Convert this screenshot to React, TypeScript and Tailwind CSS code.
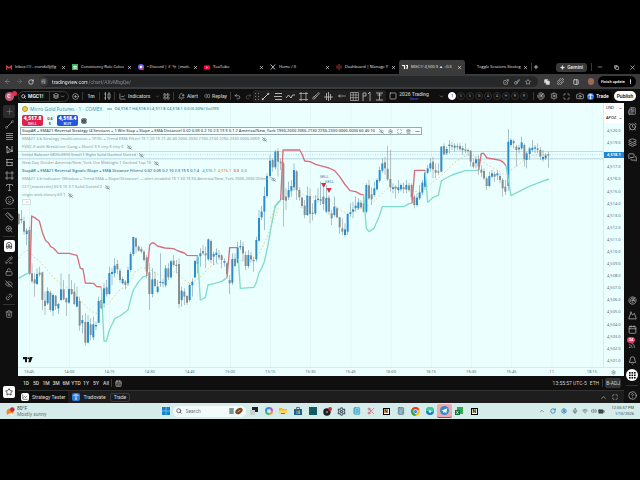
import type { ReactNode } from "react";
import {
  AlarmClock,
  ArrowLeft,
  ArrowRight,
  Battery,
  Bell,
  BellPlus,
  Brush,
  Calendar,
  CalendarRange,
  Camera,
  ChartLine,
  ChevronDown,
  ChevronUp,
  CirclePlus,
  CircleHelp,
  Copy,
  Ellipsis,
  ExternalLink,
  EyeOff,
  FastForward,
  Info,
  Key,
  Layers,
  LayoutGrid,
  Link2,
  LockOpen,
  Magnet,
  Maximize,
  MessagesSquare,
  Mic,
  Minus,
  MoveLeft,
  Mountain,
  Newspaper,
  PanelRight,
  PencilLine,
  Plus,
  Puzzle,
  Radar,
  Redo2,
  RotateCw,
  Rss,
  Ruler,
  Search,
  Settings,
  SlidersHorizontal,
  Smile,
  Sparkle,
  Square,
  Star,
  Trash2,
  Type,
  Undo2,
  Volume2,
  Wifi,
  X,
  ZoomIn,
  Scissors,
  Calculator,
  NotebookText,
} from "lucide-react";

// x, high, body top, body bottom, low, 1 = up
type Candle = [number, number, number, number, number, number];

const candlesA: Candle[] = [
  [56, 40, 42, 72, 75, 0], [64, 30, 57, 60, 70, 1], [72, 50, 63, 95, 105, 0], [80, 85, 92, 102, 135, 1],
  [88, 80, 90, 220, 225, 0], [96, 190, 220, 244, 250, 0], [104, 220, 238, 250, 290, 0], [111, 205, 222, 252, 255, 1],
  [119, 200, 218, 224, 230, 0], [127, 215, 217, 300, 330, 0], [135, 275, 302, 318, 345, 0], [143, 262, 273, 310, 315, 1],
  [151, 272, 277, 330, 335, 0], [159, 280, 285, 332, 348, 1], [167, 285, 287, 318, 330, 0], [175, 308, 312, 325, 342, 1],
  [183, 220, 268, 300, 303, 1], [191, 240, 268, 298, 300, 0], [199, 292, 295, 307, 348, 0], [207, 222, 267, 308, 312, 1],
  [215, 240, 267, 282, 285, 0], [223, 250, 275, 312, 315, 0], [231, 260, 290, 320, 322, 1], [239, 290, 303, 377, 392, 0],
  [247, 345, 360, 370, 400, 1], [256, 340, 366, 428, 437, 0], [264, 345, 366, 428, 430, 1], [272, 355, 373, 405, 420, 0],
  [280, 350, 373, 412, 420, 1], [288, 365, 375, 378, 390, 1], [296, 290, 303, 368, 370, 1], [304, 270, 300, 325, 327, 0],
  [312, 250, 265, 310, 322, 1], [320, 240, 262, 283, 290, 0], [328, 200, 219, 282, 285, 1], [336, 205, 216, 222, 255, 1],
  [344, 175, 197, 220, 232, 1], [352, 180, 192, 208, 222, 0], [360, 205, 212, 240, 248, 0], [368, 230, 237, 250, 253, 1],
  [376, 240, 245, 255, 268, 0], [384, 200, 210, 250, 258, 1], [392, 155, 162, 210, 215, 1], [400, 110, 111, 162, 168, 1],
  [408, 112, 115, 140, 160, 0], [416, 135, 140, 152, 155, 0], [424, 140, 147, 155, 160, 0], [432, 150, 155, 180, 185, 0],
  [440, 165, 172, 215, 235, 0], [448, 190, 217, 282, 330, 0], [457, 205, 238, 282, 292, 1], [465, 215, 237, 258, 262, 0],
  [473, 240, 260, 276, 280, 1], [481, 160, 245, 249, 260, 1], [489, 235, 246, 249, 262, 0], [497, 195, 205, 256, 262, 1],
  [505, 190, 205, 232, 240, 0], [513, 180, 184, 232, 235, 1], [521, 165, 182, 195, 200, 0], [529, 180, 194, 197, 220, 0],
  [537, 175, 192, 312, 325, 0], [545, 260, 272, 300, 320, 1], [553, 265, 275, 290, 315, 0], [561, 285, 288, 308, 315, 0],
  [569, 250, 255, 300, 305, 1], [577, 235, 245, 256, 290, 1], [585, 180, 183, 232, 235, 1], [593, 165, 170, 192, 220, 1],
  [601, 145, 160, 169, 200, 1], [609, 135, 153, 160, 165, 0], [617, 140, 160, 166, 205, 0], [625, 115, 118, 178, 182, 1],
  [633, 118, 123, 180, 190, 0], [641, 155, 162, 170, 195, 1], [649, 145, 158, 165, 190, 1], [657, 150, 165, 172, 180, 0],
  [665, 163, 166, 180, 205, 0], [673, 175, 183, 188, 200, 1], [681, 188, 190, 222, 225, 0], [689, 225, 240, 250, 282, 0],
  [697, 160, 177, 248, 255, 1], [705, 160, 176, 198, 202, 0], [713, 125, 142, 188, 190, 1], [721, 120, 138, 142, 150, 1],
  [729, 125, 139, 160, 185, 0], [737, 155, 165, 198, 210, 0], [745, 150, 165, 198, 205, 1], [753, 155, 166, 178, 188, 0],
  [761, 170, 180, 184, 215, 0], [769, 110, 120, 178, 185, 1],
];

const candlesB: Candle[] = [
  [135, 330, 354, 422, 425, 1], [143, 318, 335, 352, 360, 1], [151, 260, 288, 335, 390, 1], [159, 220, 228, 288, 295, 1],
  [168, 165, 182, 228, 235, 1], [176, 175, 180, 202, 215, 0], [184, 150, 155, 202, 208, 1], [192, 145, 153, 185, 230, 0],
  [200, 175, 185, 190, 210, 0], [208, 185, 190, 300, 380, 0], [216, 265, 290, 302, 330, 0], [224, 245, 270, 292, 300, 1],
  [232, 240, 258, 272, 290, 1], [240, 190, 210, 262, 270, 1], [248, 210, 214, 270, 300, 0], [256, 262, 270, 292, 302, 0],
  [264, 290, 293, 318, 325, 0], [272, 300, 317, 345, 355, 0], [280, 260, 287, 345, 348, 1], [288, 265, 288, 342, 370, 0],
  [296, 310, 338, 342, 362, 0], [304, 285, 300, 340, 345, 1], [312, 265, 296, 300, 308, 1], [320, 245, 298, 301, 315, 1],
  [328, 265, 290, 312, 330, 0], [337, 255, 294, 335, 340, 1], [345, 285, 293, 335, 345, 0], [353, 330, 340, 355, 375, 0],
  [361, 290, 320, 345, 350, 1], [369, 320, 325, 352, 355, 0], [377, 350, 352, 382, 402, 0], [385, 355, 385, 395, 405, 0],
  [393, 370, 388, 405, 410, 1], [401, 340, 342, 395, 405, 1], [409, 310, 337, 342, 350, 1], [417, 305, 328, 335, 355, 1],
  [425, 290, 317, 325, 335, 1], [433, 295, 307, 325, 330, 1], [441, 300, 308, 322, 325, 0], [449, 285, 310, 335, 338, 0],
  [457, 250, 255, 335, 340, 1], [465, 240, 256, 295, 300, 0], [473, 262, 283, 298, 315, 0], [481, 245, 265, 285, 290, 1],
  [489, 235, 240, 268, 272, 1], [497, 200, 210, 242, 248, 1], [505, 175, 190, 212, 218, 1], [513, 170, 187, 205, 225, 0],
  [521, 138, 206, 238, 243, 0], [529, 150, 237, 262, 275, 0], [537, 250, 262, 267, 280, 1], [545, 255, 260, 266, 295, 0],
  [553, 240, 262, 270, 280, 1], [561, 250, 255, 268, 275, 1], [569, 248, 262, 267, 280, 0], [577, 240, 255, 268, 280, 1],
  [585, 248, 256, 270, 275, 0], [593, 250, 255, 292, 300, 0], [601, 285, 290, 315, 325, 0], [609, 280, 293, 315, 320, 1],
  [617, 255, 277, 295, 300, 1], [625, 240, 248, 278, 285, 1], [633, 210, 218, 260, 270, 1],
];

const candlesC: Candle[] = [
  [2, 195, 205, 218, 222, 1], [10, 175, 190, 205, 215, 1], [18, 170, 185, 208, 235, 0], [26, 190, 210, 218, 235, 0],
  [34, 190, 214, 218, 225, 0], [43, 138, 140, 215, 217, 1], [51, 130, 138, 163, 165, 0], [59, 140, 147, 160, 165, 1],
  [67, 120, 134, 138, 160, 1], [75, 125, 136, 140, 150, 0], [83, 130, 137, 143, 155, 1], [91, 130, 138, 142, 150, 0],
  [99, 130, 138, 148, 152, 0], [107, 138, 145, 150, 165, 1], [115, 130, 148, 151, 160, 0], [123, 145, 150, 153, 165, 0],
  [131, 150, 152, 185, 200, 0], [139, 175, 187, 200, 205, 0], [147, 170, 178, 190, 205, 1], [155, 165, 177, 200, 225, 0],
  [163, 195, 209, 218, 230, 0], [171, 205, 213, 235, 240, 0], [179, 230, 235, 258, 270, 0], [187, 215, 228, 258, 262, 1],
  [195, 210, 220, 230, 235, 1], [203, 215, 222, 230, 245, 0], [211, 210, 220, 226, 240, 1], [219, 220, 228, 240, 250, 0],
  [227, 235, 240, 265, 290, 0], [235, 240, 260, 275, 285, 0], [244, 87, 125, 258, 272, 1], [252, 115, 120, 135, 140, 1],
  [260, 118, 123, 130, 145, 0], [268, 135, 140, 150, 200, 0], [276, 135, 143, 148, 160, 1], [284, 110, 127, 145, 150, 1],
  [292, 130, 135, 178, 200, 0], [299, 155, 160, 180, 205, 1], [308, 140, 145, 162, 180, 1], [316, 120, 143, 150, 155, 1],
  [324, 135, 142, 146, 160, 1], [332, 130, 145, 150, 160, 0], [340, 140, 150, 170, 180, 0], [348, 150, 171, 178, 185, 1],
  [356, 160, 166, 175, 180, 1], [364, 155, 163, 166, 203, 0],
];

const Candles = ({ data }: { data: Candle[] }) => (
  <>
    {data.map(([x, high, top, bottom, low, up]) => (
      <g key={x} fill={up ? "#2b8dcc" : "#8b8c8e"}>
        <rect x={x - 1} y={high} width={2} height={low - high} fill={up ? "#7ba3b6" : "#9aa4a6"} />
        <rect x={x - 3} y={top} width={6} height={Math.max(bottom - top, 4)} />
      </g>
    ))}
  </>
);

const Line = ({ points, kind }: { points: string; kind: "stop" | "trail" | "ema" }) => (
  <polyline
    points={points}
    fill="none"
    stroke={kind === "stop" ? "#d66f7c" : kind === "trail" ? "#80dccd" : "#dcb968"}
    strokeWidth={kind === "ema" ? 2 : 4}
    strokeDasharray={kind === "ema" ? "5 6" : undefined}
    strokeLinejoin="round"
  />
);

const PriceChart = () => (
  <svg viewBox="0 0 1755 792" className="block h-auto w-full" role="img" aria-label="MGC1! price chart">
    {/* Session grid */}
    {Array.from({ length: 15 }, (_, i) => (
      <rect key={i} x={33 + i * 120.6} y={0} width={2} height={792} fill="#dff4f5" />
    ))}
    <rect x={0} y={144} width={1755} height={3} fill="#c3dce4" />
    <path d="M0 155H1755" stroke="#8fc4e4" strokeWidth={2} strokeDasharray="3 4" />
    <rect x={0} y={166} width={1755} height={3} fill="#b7d6e2" />

    <g transform="translate(-54 291)">
      <Line kind="ema" points="56,175 72,155 85,150 100,170 120,185 140,208 160,232 180,250 200,262 220,275 240,300 256,318 275,335 290,340 310,325 330,305 350,280 365,265 380,262 395,235 405,215 425,203 445,205 470,222 490,230 510,218 530,215 550,238 570,250 590,240 610,222 625,205 640,193 680,187 705,195 730,178 760,180 780,155 800,115 815,75 835,25" />
      <Candles data={candlesA} />
      <Line kind="trail" points="56,235 75,224 88,218" />
      <Line kind="stop" points="90,222 95,48 104,53 118,63 128,100 137,122 145,128 152,140 160,144 175,160 208,160 218,163 231,166 241,205 249,207 256,249 280,250 289,259 304,261" />
      <Line kind="trail" points="304,262 312,423 319,423 328,390 340,365 345,355 360,348 384,330 392,298 400,270 416,245 430,230 440,228" />
      <Line kind="stop" points="440,228 449,135 457,128 465,131 472,138 495,144 520,146 535,153 553,159 561,166 593,167" />
      <Line kind="trail" points="593,167 601,300 616,293 624,255 645,250 665,244 681,233" />
      <Line kind="stop" points="681,233 689,143 713,143" />
      <Line kind="trail" points="715,175 721,265 762,262 770,245 777,218 785,205 793,185 802,145 810,100 818,55 826,18 840,3 842,0" />
    </g>

    <g transform="translate(588 -9)">
      <Line kind="ema" points="170,355 180,330 200,300 215,285 235,270 250,270 270,285 290,292 320,290 345,298 365,320 385,335 400,342 425,330 450,322 470,312 490,295 515,270 530,262 560,265 600,275 625,272" />
      <Candles data={candlesB} />
      <Line kind="trail" points="180,322 192,307 200,300" />
      <Line kind="stop" points="200,300 207,150 257,150 264,162 272,183 288,185 305,193 330,200 345,204 362,212 377,230 392,252 408,272 425,275 440,283 449,284" />
      <Line kind="trail" points="449,284 457,385 465,395 480,385 495,350 505,320 570,320 585,311 594,310" />
      <Line kind="stop" points="594,310 602,211 634,211" />
      <path d="M321 249h16l-8 15zM337 264h16l-8 15z" fill="#d92f48" />
      <text x={317} y={235} className="font-['Roboto'] text-[12px]" fill="#3b72b4">SELL</text>
      <text x={333} y={250} className="font-['Roboto'] text-[12px]" fill="#3b72b4">SELL</text>
    </g>

    <g transform="translate(1227 -9)">
      <Line kind="ema" points="0,260 20,245 40,230 60,210 80,190 105,172 130,165 150,170 170,188 200,205 235,225 245,215 265,200 285,185 300,175 320,165 345,165 364,163" />
      <Candles data={candlesC} />
      <Line kind="trail" points="-5,215 2,307 10,300 18,292 34,286 43,243 52,237 75,225 115,212 155,211" />
      <Line kind="stop" points="155,211 163,160 170,160 180,174 200,177 220,181 229,187 237,197" />
      <Line kind="trail" points="237,197 252,287 270,278 300,262 330,250 366,237" />
    </g>

    {/* TradingView mark */}
    <path d="M15 762h12v16h-6v-9h-6zM35 762h9l-6 16h-7z" fill="#111" />
    <circle cx={31} cy={766} r={3} fill="#111" />
  </svg>
);

const Divider = () => <span className="h-2 w-px shrink-0 bg-[#3a3a3a]" />;

const Tool = ({ label, className = "w-[13px]", children }: { label: string; className?: string; children: ReactNode }) => (
  <button aria-label={label} className={`flex shrink-0 items-center justify-center ${className}`}>
    {children}
  </button>
);

const tabs = [
  { title: "Inbox (1) - crandallj@g", icon: <svg viewBox="0 0 8 6" className="h-[5px] w-[7px]"><path d="M1 6V1l3 2.5L7 1v5" fill="none" stroke="#e5483c" strokeWidth="1.6" /></svg> },
  { title: "Consistency Rule Calcu", icon: <svg viewBox="0 0 6 6" className="size-[6px]"><rect width="6" height="6" fill="#37b25c" /><path d="M1 2.5h4M1 4h4M3 1.5v3.5" stroke="#fff" strokeWidth=".7" /></svg> },
  { title: "• Discord | # 🐂 |matt-", icon: <svg viewBox="0 0 6 6" className="size-[6px]"><circle cx="3" cy="3" r="3" fill="#6a65e8" /><circle cx="3" cy="3" r="1.3" fill="#fff" /><circle cx="4.8" cy="4.6" r="1.3" fill="#e5304c" /></svg> },
  { title: "YouTube", icon: <svg viewBox="0 0 7 5" className="h-[5px] w-[6px]"><rect width="7" height="5" rx="1.2" fill="#f03" /><path d="M2.7 1.3v2.4l2-1.2z" fill="#fff" /></svg> },
  { title: "Home / X", icon: <svg viewBox="0 0 6 6" className="size-[6px]"><path d="M.7.5 5 5.5M5.2.5.8 5.5" stroke="#ddd" strokeWidth=".8" /></svg> },
  { title: "Dashboard | Manage Y", icon: <svg viewBox="0 0 6 6" className="size-[6px]"><path d="M1 1.5v3M3 0v6M5 1.5v3" stroke="#c43b32" strokeWidth=".9" /></svg> },
  { title: "MGC1! 4,500.9 ▲ +0.5", active: true, icon: <svg viewBox="0 0 6 6" className="size-[6px]"><path d="M0 1.5h2.5v3.5M4 1.5h2L4.7 5" fill="none" stroke="#fff" strokeWidth="1.2" /></svg> },
  { title: "Toggle Sessions Strateg", icon: null },
];

const BrowserTabs = () => (
  <div className="flex h-[14px] items-center pl-[3px] text-[#e8e8e8]">
    {tabs.map((tab) => (
      <div
        key={tab.title}
        className={`flex h-full w-[66px] min-w-0 items-center gap-[3px] rounded-t-[3px] px-[3px] ${tab.active ? "bg-[#3b3b3c]" : ""}`}
      >
        <span className="flex w-[6px] shrink-0 justify-center">{tab.icon}</span>
        <span className="w-[46px] shrink-0 font-['Open_Sans'] text-[4px] font-medium whitespace-nowrap">{tab.title}</span>
        <button aria-label="Close tab" className="-ml-[3px] shrink-0"><X size={5} strokeWidth={3} /></button>
      </div>
    ))}
    <Divider />
    <Tool label="New tab" className="w-2"><Plus size={6} strokeWidth={3} /></Tool>
    <button className="mr-1 ml-auto flex h-[9px] items-center gap-[2px] rounded-[3px] bg-[#39393b] px-1 font-medium">
      <Sparkle size={5} fill="currentColor" /> Gemini
    </button>
    <Divider />
    <Tool label="Minimize" className="w-4"><Minus size={6} /></Tool>
    <Tool label="Restore" className="w-4"><Copy size={5} strokeWidth={3} /></Tool>
    <Tool label="Close" className="w-4"><X size={7} /></Tool>
  </div>
);

const AddressBar = () => (
  <div className="flex h-[15px] items-center bg-[#3b3b3c] pr-1 pl-px text-[#dadada]">
    <Tool label="Back" className="w-3 text-[#8f8f8f]"><ArrowLeft size={7} /></Tool>
    <Tool label="Forward" className="w-3 text-[#777]"><ArrowRight size={7} /></Tool>
    <Tool label="Reload" className="w-3"><RotateCw size={6} strokeWidth={3} /></Tool>
    <label className="ml-[2px] flex h-[11px] min-w-0 flex-1 items-center rounded-full bg-[#27282a] pr-1">
      <span className="mr-1 flex size-[9px] items-center justify-center rounded-full bg-[#3b3b3c]">
        <SlidersHorizontal size={5} />
      </span>
      <input
        aria-label="Address"
        defaultValue="tradingview.com/chart/AXvMbgQe/"
        className="min-w-0 flex-1 bg-[linear-gradient(90deg,#fff_35px,#8d8d8d_35px)] bg-clip-text text-transparent outline-none"
      />
      <Tool label="Install" className="w-[11px]"><ExternalLink size={6} /></Tool>
      <Tool label="Passwords" className="w-[11px]"><Key size={6} /></Tool>
      <Tool label="Bookmark" className="w-[11px]"><Star size={6} /></Tool>
    </label>
    <Tool label="Cast" className="ml-[3px] w-[13px]"><Copy size={6} fill="currentColor" /></Tool>
    <Tool label="Extensions" className="w-[13px]"><Puzzle size={7} /></Tool>
    <Divider />
    <Tool label="Side panel" className="w-4"><PanelRight size={6} strokeWidth={3} /></Tool>
    <span className="mx-1 h-[7px] w-[6px] rounded-full bg-[#9c6a55]" />
    <button className="flex h-[11px] items-center gap-[3px] rounded-full bg-black px-[3px] text-[4px] font-medium text-white">
      Finish update <Ellipsis size={5} className="rotate-90" strokeWidth={4} />
    </button>
  </div>
);

const drawTools = [
  { name: "Trend line", icon: <svg viewBox="0 0 9 9" className="size-[9px]"><path d="M1.5 7.5l6-6" stroke="currentColor" strokeWidth="1" /><circle cx="1.7" cy="7.3" r="1" fill="currentColor" /><circle cx="7.3" cy="1.7" r="1" fill="currentColor" /></svg> },
  { name: "Fib retracement", icon: <svg viewBox="0 0 9 9" className="size-[9px]"><path d="M1 1.5h7M0 4.5h8M1 7.5h7" stroke="currentColor" strokeWidth=".9" /></svg> },
  { name: "Elliott wave", icon: <svg viewBox="0 0 9 9" className="size-[9px]"><path d="M0 6l2.5-3L5 6l1.500-3L9 3" fill="none" stroke="currentColor" strokeWidth=".9" /></svg> },
  { name: "Rectangle", icon: <svg viewBox="0 0 9 9" className="size-[9px]"><path d="M2 0v9M7 0v9M0 1.500h9M0 7.500h9" stroke="currentColor" strokeWidth=".7" /></svg> },
  { name: "Brush", icon: <Brush size={8} /> },
  { name: "Vertical line", icon: <svg viewBox="0 0 9 9" className="size-[9px]"><path d="M2.500 1v7M4.500 0v9M6.500 2v6M0 5h9" stroke="currentColor" strokeWidth=".8" /></svg> },
  { name: "Arrow", icon: <MoveLeft size={8} /> },
  { name: "Table", icon: <svg viewBox="0 0 9 9" className="size-[9px]"><path d="M.5.5h8v8h-8zM.5 3h8M.5 5.700h8M3.200.5v8M5.900.5v8" fill="none" stroke="currentColor" strokeWidth=".6" /></svg> },
  { name: "Flag mark", icon: <svg viewBox="0 0 9 9" className="size-[9px]"><path d="M1 9V1h3v3H1M8 9V0L6 2" fill="none" stroke="currentColor" strokeWidth=".8" /></svg> },
  { name: "Measure", icon: <svg viewBox="0 0 9 9" className="size-[9px]"><path d="M1 1h7M1 8h7M4.500 1v7M2.500 3h4" fill="none" stroke="currentColor" strokeWidth=".8" /></svg> },
];

const layouts = ["1", "S", "S", "G", "A", "A", "H", "R", "R"];

const ChartToolbar = () => (
  <div className="flex h-[14px] items-center bg-[#0f0f0f] pr-1 text-[#c4c4c4]">
    <Tool label="Account" className="w-[18px]">
      <span className="relative flex size-[9px] items-center justify-center rounded-full bg-[#c2557a] font-bold text-white">
        C
        <span className="absolute -top-px -right-[3px] size-[5px] rounded-full bg-[#e8304a]" />
      </span>
    </Tool>
    <button className="flex h-[11px] w-[51px] shrink-0 items-center rounded-full border border-[#3a3a3a] px-[2px] font-semibold text-white">
      <Search size={5} strokeWidth={3} className="mr-[2px]" /> MGC1!
      <span className="ml-auto h-full w-px bg-[#3a3a3a]" />
      <Layers size={6} className="mr-px ml-[3px]" />
      <ChevronDown size={5} className="mr-px" />
    </button>
    <Tool label="Compare"><CirclePlus size={7} /></Tool>
    <Divider />
    <button className="w-4 shrink-0 font-semibold">1m</button>
    <Divider />
    <Tool label="Candles" className="w-[14px]">
      <svg viewBox="0 0 7 8" className="h-2 w-[7px]"><path d="M1.500 0v8M0 2h2M0 6h2M4 2h2v4H4zM5 0v2M5 6v2" fill="none" stroke="currentColor" strokeWidth=".7" /></svg>
    </Tool>
    <Divider />
    <button className="flex w-[45px] shrink-0 items-center gap-[2px] pl-1 font-medium">
      <ChartLine size={7} /> Indicators <ChevronDown size={5} className="ml-auto text-[#888]" />
    </button>
    <Tool label="Templates"><LayoutGrid size={7} /></Tool>
    <Divider />
    <button className="flex w-[30px] shrink-0 items-center gap-[2px] pl-1 font-medium">
      <BellPlus size={7} /> Alert
    </button>
    <button className="flex w-[26px] shrink-0 items-center gap-[2px] font-medium">
      <FastForward size={6} className="rotate-180" /> Replay
    </button>
    <Divider />
    <Tool label="Undo"><Undo2 size={7} /></Tool>
    <Tool label="Redo" className="w-2 text-[#666]"><Redo2 size={7} /></Tool>
    <div className="ml-px flex h-[12px] w-[133px] shrink-0 items-center rounded-[2px] bg-[#1f1f1f]">
      <svg viewBox="0 0 4 8" className="ml-[2px] h-2 w-1" fill="#777"><path d="M0 1h1v1H0zM3 1h1v1H3zM0 4h1v1H0zM3 4h1v1H3zM0 7h1v1H0zM3 7h1v1H3z" /></svg>
      {drawTools.map((t) => (
        <Tool key={t.name} label={t.name} className="flex-1">{t.icon}</Tool>
      ))}
    </div>
    <Tool label="Layout setup"><Square size={8} /></Tool>
    <div className="flex w-[30px] shrink-0 flex-col items-center text-[5px] leading-[5px] whitespace-nowrap">
      <span className="font-medium">2026 Trading</span>
      <button className="text-[4px] leading-[4px] text-[#3f62f0]">Save</button>
    </div>
    <Tool label="Layouts" className="ml-auto w-[13px]"><ChevronDown size={5} /></Tool>
    <div className="flex shrink-0 gap-px">
      {layouts.map((l, i) => (
        <button
          key={i}
          className={`size-[8px] rounded-full border text-[4px] leading-[6px] ${i === 0 ? "border-white bg-white text-black" : "border-[#2e2e2e] text-[#999]"}`}
        >
          {l}
        </button>
      ))}
    </div>
    <span className="w-[5px]" />
    <Divider />
    <Tool label="Quick search"><Radar size={8} /></Tool>
    <Tool label="Settings"><Settings size={8} /></Tool>
    <Tool label="Fullscreen"><Maximize size={7} /></Tool>
    <Tool label="Snapshot"><Camera size={8} /></Tool>
    <button className="mr-[2px] flex h-[11px] w-[26px] shrink-0 items-center gap-[2px] rounded-full bg-black px-px font-medium text-white">
      <span className="flex size-[7px] items-center justify-center rounded-full bg-[#2c7be0]"><Type size={5} strokeWidth={4} /></span>
      Trade
    </button>
    <button className="h-[10px] w-[22px] shrink-0 rounded-full bg-white text-center font-medium text-black">Publish</button>
  </div>
);

const leftTools = [
  { name: "Cross", icon: <Plus size={9} strokeWidth={1} />, active: true },
  { name: "Trend line", icon: <svg viewBox="0 0 9 9" className="size-[9px]"><path d="M2 7l5-5" stroke="currentColor" strokeWidth=".8" /><circle cx="1.500" cy="7.500" r=".9" fill="none" stroke="currentColor" strokeWidth=".6" /><circle cx="7.500" cy="1.500" r=".9" fill="none" stroke="currentColor" strokeWidth=".6" /></svg> },
  { name: "Fib", icon: <svg viewBox="0 0 9 9" className="size-[9px]"><path d="M1 1.500h7M1 3.500h7M1 5.500h7M1 7.500h7" stroke="currentColor" strokeWidth=".8" /></svg> },
  { name: "Pattern", icon: <svg viewBox="0 0 9 9" className="size-[9px]"><path d="M2 8V2l5 4V1M2 8l5-2M2 8l3-4" fill="none" stroke="currentColor" strokeWidth=".8" /><circle cx="2" cy="2" r="1" fill="currentColor" /><circle cx="7" cy="6" r="1" fill="currentColor" /></svg> },
  { name: "Position", icon: <svg viewBox="0 0 9 9" className="size-[9px]"><path d="M1 1.500h7M1 4.500h7M1 7.500h7M2 1.500v6M7 4.500v3" fill="none" stroke="currentColor" strokeWidth=".8" /></svg> },
  { name: "Shapes", icon: <svg viewBox="0 0 9 9" className="size-[9px]"><path d="M2 0v9M7 0v9M0 2h9M0 7h9" stroke="currentColor" strokeWidth=".7" /></svg> },
  { name: "Text", icon: <Type size={9} /> },
  { name: "Emoji", icon: <Smile size={9} /> },
];

const LeftRail = () => (
  <nav className="flex w-[18px] shrink-0 flex-col items-center bg-[#0f0f0f] pt-[2px] pb-[5px] text-[#a9a9a9]">
    <div className="flex h-[102px] flex-col">
      {leftTools.map((t) => (
        <Tool key={t.name} label={t.name} className={`w-3 flex-1 ${t.active ? "rounded-[2px] bg-[#2b2b2b]" : ""}`}>
          {t.icon}
        </Tool>
      ))}
    </div>
    <span className="my-px h-px w-3 bg-[#333]" />
    <Tool label="Measure" className="h-3"><Ruler size={9} /></Tool>
    <Tool label="Zoom in" className="h-[13px]"><ZoomIn size={8} /></Tool>
    <span className="my-px h-px w-3 bg-[#333]" />
    <Tool label="Magnet" className="my-[2px] h-3 w-[11px] rounded-[2px] bg-white text-[#222]">
      <Magnet size={8} className="-rotate-45" />
    </Tool>
    <Tool label="Stay in drawing mode" className="h-3"><PencilLine size={8} /></Tool>
    <Tool label="Lock drawings" className="h-3"><LockOpen size={8} /></Tool>
    <Tool label="Hide drawings" className="h-3"><EyeOff size={8} /></Tool>
    <Tool label="Sync drawings" className="h-[13px]"><Link2 size={8} className="-rotate-45" /></Tool>
    <span className="my-px h-px w-3 bg-[#333]" />
    <Tool label="Remove" className="h-4"><Trash2 size={8} /></Tool>
    <Tool label="Favorites" className="mt-auto h-3 w-3 rounded-[2px] bg-white text-black"><Star size={8} /></Tool>
  </nav>
);

const RightRail = () => (
  <nav className="flex w-4 shrink-0 flex-col items-center bg-[#0f0f0f] pb-px text-[#b4b4b4]">
    <Tool label="Watchlist" className="h-4"><Newspaper size={8} /></Tool>
    <Tool label="Alerts" className="h-[15px]"><AlarmClock size={9} /></Tool>
    <Tool label="Object tree" className="h-4"><Layers size={9} /></Tool>
    <Tool label="Chats" className="h-[15px]"><MessagesSquare size={9} /></Tool>
    <Tool label="Screeners" className="mt-auto h-[15px]"><Radar size={9} /></Tool>
    <Tool label="Pine" className="h-[14px]"><Mountain size={9} /></Tool>
    <Tool label="Calendar" className="h-[15px]"><Calendar size={9} /></Tool>
    <Tool label="News" className="relative h-[15px]">
      <Rss size={8} />
      <span className="absolute top-0 right-px h-[6px] w-2 rounded-full bg-[#f0386b] text-[4px] leading-[6px] font-bold text-white">34</span>
    </Tool>
    <Tool label="Notifications" className="h-4"><Bell size={9} /></Tool>
    <Tool label="Products" className="my-px size-3 rounded-full bg-white text-black">
      <svg viewBox="0 0 7 7" className="size-[7px]" fill="currentColor">
        {[0, 1, 2].map((r) => [0, 1, 2].map((c) => <rect key={`${r}${c}`} x={c * 2.5} y={r * 2.5} width="1.600" height="1.600" />))}
      </svg>
    </Tool>
    <span className="my-[3px] h-px w-3 bg-[#333]" />
    <Tool label="Help" className="h-[13px]"><CircleHelp size={9} /></Tool>
  </nav>
);

const studies = [
  { text: "EMA21 3-b Strategy (multi-session + TP/SL + Trend EMA Filter) 15 1 20 15 21 40 40 2000-2030 2100-2230 2250-2330 0000-0059" },
  { text: "FVGC-E with BreakLine (Long + Short) 5 5 tiny 5 tiny 5" },
  { text: "Initial Balance 0820-0920 Small 1 Right Solid Dashed Dotted" },
  { text: "New Day Divider America/New_York Use Midnight 1 Dashed Top 10" },
  { text: "StopAR + EMA21 Reversal Signals (Slope + EMA Distance Filters) 0.02 0.05 0.2 10 2.5 15 5 0.1 4", shown: true },
  { text: "EMA21 3-b Indicator (Window + Trend EMA + Slope/Distance) — alert-enabled 15 1 30 15 50 America/New_York 2000-2030 (Other" },
  { text: "CCT [mastercht] 60 5 15 3 1 Solid Dotted 2" },
  { text: "virgin wick theory 60 1" },
];

const Legend = () => (
  <div className="absolute top-0 left-1 font-['Open_Sans','Noto_Sans',sans-serif] text-[4px] leading-[8px] font-semibold whitespace-nowrap text-[#9eabae]">
    <div className="flex h-[11px] items-center gap-[2px] text-[5px] font-normal text-[#3f8fa8]">
      <span className="size-[6px] rounded-full border border-[#c99a1e] bg-[#f2c94c]" />
      <h1>Micro Gold Futures · 1 · COMEX</h1>
      <span className="ml-[3px] h-[2px] w-[5px] bg-[#9fc9d3]" />
      <p className="text-[4px] font-semibold">O4,518.1 H4,518.3 L4,517.8 C4,518.1 0.0 (0.00%) Vol259</p>
    </div>
    <div className="flex h-[13px] items-center text-[#333]">
      <button className="h-[11px] w-[21px] rounded-[2px] bg-[#e0214a] text-[4px] leading-[5px] text-white">
        <b className="block text-[5px]">4,517.8</b>SELL
      </button>
      <span className="w-[14px] text-center leading-[5px]">0.6<br />5</span>
      <button className="h-[11px] w-[21px] rounded-[2px] bg-[#2456e0] text-[4px] leading-[5px] text-white">
        <b className="block text-[5px]">4,518.4</b>BUY
      </button>
      <Info size={6} className="ml-[3px] rounded-full bg-[#333] text-white" />
    </div>
    <div className="-ml-[2px] flex h-[8px] items-center gap-1 border border-[#9aa9ac] bg-[#f6ffff] px-px text-[#4b5a60]">
      <span>
        StopAR + EMA21 Reversal Strategy (4 Sessions + 1 Win Stop + Slope + EMA Distance) 0.02 0.05 0.2 10 2.5 15 5 0.1 2 America/New_York 1950-2030 2050-2130 2250-2330 0000-0030 60 40 10
      </span>
      <button aria-label="Hide"><EyeOff size={5} /></button>
      <button aria-label="Settings"><Settings size={5} /></button>
      <button aria-label="Source"><Maximize size={5} /></button>
      <button aria-label="Remove"><Trash2 size={5} /></button>
      <button aria-label="More"><Ellipsis size={5} /></button>
    </div>
    {studies.map((s) => (
      <div key={s.text} className={`flex h-[8px] items-center gap-[3px] ${s.shown ? "text-[#2f7d9d]" : ""}`}>
        <span>{s.text}</span>
        {s.shown ? (
          <span className="flex gap-[2px]">
            <span className="text-[#2fb6c9]">4,516.1</span>
            <span className="text-[#e59a2c]">4,516.1</span>
            <span className="text-[#e0485c]">0.0</span>
            <span className="text-[#35b8a4]">0.0</span>
          </span>
        ) : (
          <EyeOff size={5} className="text-[#4a585c]" />
        )}
      </div>
    ))}
    <button aria-label="Collapse legend" className="flex h-[6px] w-[9px] items-center justify-center border border-[#d4e2e4] bg-white text-[#444]">
      <ChevronUp size={4} />
    </button>
  </div>
);

const prices = Array.from({ length: 20 }, (_, i) => 4520 - i);

const PriceScale = () => (
  <div className="flex w-[21px] shrink-0 flex-col border-l border-[#d6ebec] font-['Noto_Sans'] text-[4px] text-[#586c73]">
    {["USD", "APOZ"].map((unit) => (
      <label key={unit} className="flex h-[10px] items-center justify-between bg-white px-[2px] text-black">
        <select aria-label={unit} className="w-[13px] appearance-none text-[4px]"><option>{unit}</option></select>
        <ChevronDown size={3} strokeWidth={4} />
      </label>
    ))}
    <div className="mt-[2px] flex flex-1 flex-col">
      {prices.map((p) => (
        <span key={p} className="flex flex-1 items-center">
          <span className={`h-[6px] flex-1 pl-[3px] leading-[6px] ${p === 4518 ? "bg-[#1e88d6] font-bold text-white" : ""}`}>
            {p === 4518 ? "4,518.1" : `4,${p - 4000}.0`}
          </span>
        </span>
      ))}
    </div>
  </div>
);

const times = ["13:45", "14:00", "14:15", "14:30", "14:45", "15:00", "15:15", "15:30", "15:45", "16:00", "16:15", "16:30", "16:45", "11", "18:15"];
const ranges = ["1D", "5D", "1M", "3M", "6M", "YTD", "1Y", "5Y", "All"];

const RangeBar = () => (
  <div className="flex h-[14px] items-center bg-[#0f0f0f] pr-[3px] pl-[3px] text-[#d0d0d0]">
    {ranges.map((r) => (
      <button key={r} className="w-[10px] text-center font-medium">{r}</button>
    ))}
    <Divider />
    <Tool label="Go to date"><CalendarRange size={7} /></Tool>
    <span className="ml-auto">13:55:57 UTC-5</span>
    <button className="mx-[3px]">ETH</button>
    <Divider />
    <button className="ml-[2px] h-[10px] rounded-[2px] bg-[#333] px-px">B-ADJ</button>
  </div>
);

const BottomTabs = () => (
  <div className="flex h-[13px] items-center border-t border-[#333] bg-[#1d1d1d] pr-[3px] text-[#dcdcdc]">
    <button className="flex h-full items-center gap-[3px] bg-[#0f0f0f] pr-[3px] pl-[3px]">
      <span className="flex size-2 items-center justify-center rounded-[2px] bg-white text-black"><ChartLine size={6} /></span>
      Strategy Tester
    </button>
    <button className="ml-1 flex items-center gap-[3px]">
      <span className="flex size-2 items-center justify-center rounded-[2px] bg-[#2c7be0]"><Type size={6} strokeWidth={4} /></span>
      Tradovate
    </button>
    <button className="ml-1 h-[9px] rounded-[2px] border border-[#3a3a3a] px-[3px] leading-[7px]">Trade</button>
    <Tool label="Expand panel" className="ml-auto w-3"><ChevronUp size={7} /></Tool>
    <Tool label="Maximize panel" className="w-3"><Maximize size={6} /></Tool>
  </div>
);

const Notion = () => (
  <span className="flex size-[7px] items-center justify-center border border-black bg-white text-[5px] font-bold text-black">N</span>
);

const apps = [
  { name: "Task view", icon: <svg viewBox="0 0 8 8" className="size-2"><rect x="2" width="6" height="5" fill="#222" /><rect y="3" width="5" height="5" fill="#c9cfd2" /></svg> },
  { name: "Copilot", icon: <svg viewBox="0 0 8 8" className="size-2" fill="none" strokeWidth="2"><path d="M4 1a3 3 0 0 0-3 3" stroke="#2f8fe6" /><path d="M1 4a3 3 0 0 0 3 3" stroke="#3cb878" /><path d="M4 7a3 3 0 0 0 3-3" stroke="#f0943c" /><path d="M7 4a3 3 0 0 0-3-3" stroke="#c04fd0" /></svg> },
  { name: "Explorer", icon: <svg viewBox="0 0 8 8" className="size-2"><path d="M0 1h3l1 1h4v5H0z" fill="#f3b932" /><path d="M0 3.500h8V7H0z" fill="#ffd968" /><path d="M2 6h4v1H2z" fill="#2f86d6" /></svg> },
  { name: "Store", icon: <svg viewBox="0 0 8 8" className="size-2"><path d="M0 2h8v6H0z" fill="#21618f" /><path d="M2.500 2V.5h3V2" fill="none" stroke="#21618f" strokeWidth=".8" /><path d="M2 3.500h1.800v1.500H2z" fill="#e8532e" /><path d="M4.200 3.500H6v1.500H4.200z" fill="#8cc63e" /><path d="M2 5.300h1.800v1.500H2z" fill="#35b0ee" /><path d="M4.200 5.300H6v1.500H4.200z" fill="#f8c51c" /></svg> },
  { name: "Platform", icon: <svg viewBox="0 0 8 8" className="size-2"><rect width="8" height="8" fill="#165a63" /></svg> },
  { name: "Recorder", icon: <svg viewBox="0 0 8 8" className="size-[9px]"><circle cx="3.500" cy="4.500" r="3.300" fill="#1f1f23" /><circle cx="3.500" cy="4.500" r="1" fill="#888" /><circle cx="6.300" cy="1.700" r="1.700" fill="#e02a35" /></svg> },
  { name: "Settings", icon: <Settings size={9} className="text-[#4d5a66]" strokeWidth={3} /> },
  { name: "Notepad", icon: <NotebookText size={8} className="text-[#2692b5]" fill="#8ed7ea" /> },
  { name: "Snipping", icon: <Scissors size={8} className="text-[#c94f56]" /> },
  { name: "Notion", icon: <Notion /> },
  { name: "Calculator", icon: <Calculator size={8} className="text-[#3a5b70]" fill="#b9d6e4" /> },
  { name: "Chrome", icon: <svg viewBox="0 0 8 8" className="size-[9px]"><circle cx="4" cy="4" r="4" fill="#fbc116" /><path d="M4 4L.5 2A4 4 0 0 1 7.500 2z" fill="#e33b2e" /><path d="M4 4L.5 2A4 4 0 0 0 4 8z" fill="#2ba24c" /><circle cx="4" cy="4" r="1.900" fill="#fff" /><circle cx="4" cy="4" r="1.400" fill="#3b7ded" /></svg> },
  { name: "Edge", icon: <svg viewBox="0 0 8 8" className="size-2"><circle cx="4" cy="4" r="4" fill="#1a79c7" /><path d="M0 4a4 4 0 0 1 8-.5c0 2-3 2-3.500 1" fill="#3fc9a5" /><circle cx="4" cy="4.500" r="1.300" fill="#e5f6fb" /></svg> },
  { name: "Telegram", active: true, icon: <svg viewBox="0 0 8 8" className="size-[9px]"><circle cx="4" cy="4" r="4" fill="#2d8fc4" /><path d="M1.500 4l5-2-1 4.500-1.500-1.200-1 .9-.1-1.500z" fill="#fff" /></svg> },
  { name: "Excel", icon: <svg viewBox="0 0 8 8" className="size-2"><path d="M2 0h6v7H2z" fill="#34a853" /><path d="M0 3h5v5H0z" fill="#156c38" /><path d="M1.300 4l2.200 3M3.500 4L1.300 7" stroke="#fff" strokeWidth=".7" /></svg> },
  { name: "Notes", icon: <Notion /> },
];

const Taskbar = () => (
  <footer className="flex h-4 items-center bg-[#d6ecea] text-[#3d4a4c]">
    <div className="flex flex-1 items-center gap-[2px] pl-[6px] leading-[6px]">
      <svg viewBox="0 0 9 9" className="size-[9px]"><circle cx="4" cy="5" r="3.500" fill="#f08b2c" /><path d="M2 8.500a2 2 0 0 1 2-2 2 2 0 0 1 3 1l.5 1z" fill="#f7f7f7" /><circle cx="6.300" cy="2.500" r="2.300" fill="#c62a32" /></svg>
      <p>80°F<br /><span className="text-[#6a7a7c]">Mostly sunny</span></p>
    </div>
    <div className="flex h-full items-center">
      <Tool label="Start" className="w-[14px]">
        <svg viewBox="0 0 8 8" className="size-2" fill="#1583cf"><path d="M0 0h3.800v3.800H0zM4.200 0H8v3.800H4.200zM0 4.200h3.800V8H0zM4.200 4.200H8V8H4.200z" /></svg>
      </Tool>
      <label className="mr-px flex h-[11px] w-[73px] items-center gap-1 rounded-full bg-[#f3fbfa] px-[3px]">
        <Search size={6} strokeWidth={3} />
        <input aria-label="Search" placeholder="Search" className="min-w-0 flex-1 outline-none placeholder:text-[#6a7a7c]" />
        <svg viewBox="0 0 14 8" className="h-2 w-[14px]"><path d="M0 1h5v6H0z" fill="#b7ab9b" /><path d="M1 2h3M1 4h3M1 6h3" stroke="#427a86" /><ellipse cx="10" cy="4" rx="4" ry="2.600" transform="rotate(-35 10 4)" fill="#7b4524" /><path d="M8.500 5l3-2" stroke="#f2e6dc" strokeWidth=".7" /></svg>
      </label>
      <div className="flex h-full w-[235px]">
        {apps.map((a) => (
          <Tool key={a.name} label={a.name} className={`my-px flex-1 ${a.active ? "rounded-[2px] border-b border-[#c4404a] bg-[#f0a9ae]" : ""}`}>
            {a.icon}
          </Tool>
        ))}
      </div>
    </div>
    <div className="flex flex-1 items-center justify-end pr-[6px]">
      <Tool label="Tray" className="w-[11px]"><ChevronUp size={6} /></Tool>
      <Tool label="Sync" className="w-[11px] text-[#1f76b5]"><RotateCw size={6} strokeWidth={3} /></Tool>
      <Tool label="Copilot" className="w-[11px] text-[#1f76b5]"><Settings size={6} strokeWidth={3} /></Tool>
      <Tool label="Microphone" className="w-[11px]"><Mic size={6} /></Tool>
      <Tool label="Network" className="w-[9px]"><Wifi size={6} /></Tool>
      <Tool label="Volume" className="w-2"><Volume2 size={6} /></Tool>
      <Tool label="Battery" className="mr-[6px] w-2"><Battery size={7} fill="currentColor" /></Tool>
      <p className="text-right text-[4px] leading-[6px]">12:55:57 PM<br />1/10/2026</p>
    </div>
  </footer>
);

const App = () => (
  <div className="min-h-screen bg-black pt-[60px] font-['Roboto','Noto_Sans',sans-serif] text-[5px] leading-[6px]">
    <BrowserTabs />
    <AddressBar />
    <ChartToolbar />
    <div className="flex">
      <LeftRail />
      <main className="min-w-0 flex-1">
        <div className="flex bg-[#ecffff]">
          <div className="relative min-w-0 flex-1">
            <PriceChart />
            <Legend />
          </div>
          <PriceScale />
        </div>
        <div className="flex h-[9px] items-center border-t border-[#d6ebec] bg-[#ecffff] font-['Noto_Sans'] text-[4px] text-[#586c73]">
          <div className="flex min-w-0 flex-1 justify-between px-px">
            {times.map((t) => (
              <span key={t} className="w-5 text-center">{t}</span>
            ))}
          </div>
          <Tool label="Scale settings" className="w-[21px]"><Settings size={5} /></Tool>
        </div>
        <RangeBar />
        <BottomTabs />
      </main>
      <RightRail />
    </div>
    <Taskbar />
  </div>
);

export default App;
